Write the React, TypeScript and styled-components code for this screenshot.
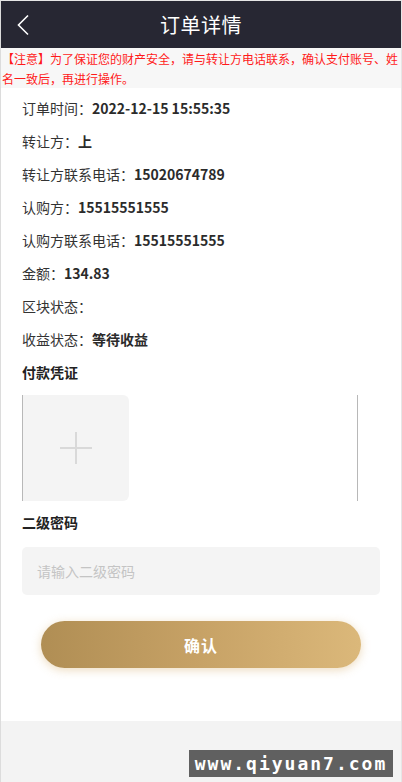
import React from 'react'
import styled, { createGlobalStyle } from 'styled-components'

const GlobalStyle = createGlobalStyle`
  html, body {
    margin: 0;
    padding: 0;
    background: #f3f3f3;
  }
  body {
    font-family: "Noto Sans CJK SC", "Liberation Sans", sans-serif;
  }
  * {
    box-sizing: border-box;
  }
`

const Page = styled.div`
  position: relative;
  width: 402px;
  height: 782px;
  border-top: 1px solid #e6e6e6;
  border-left: 1px solid #dcdcdc;
  border-right: 1px solid #e6e6e6;
  background: #f3f3f3;
`

const Header = styled.div`
  height: 47px;
  background: #272733;
  display: flex;
  align-items: center;
  justify-content: center;
  position: relative;
`

const BackButton = styled.div`
  position: absolute;
  left: 15px;
  top: 12px;
  width: 18px;
  height: 24px;
  display: flex;
  align-items: center;
`

const Title = styled.h1`
  margin: 0;
  color: #fff;
  font-size: 20px;
  font-weight: 400;
  letter-spacing: 0.5px;
`

const Notice = styled.div`
  background: #f7f7f7;
  color: #ff1a1a;
  font-size: 12px;
  line-height: 19.5px;
  padding: 1px 0 0 1px;
  height: 40px;
`

const Content = styled.div`
  background: #fff;
  padding: 4px 21px 53px;
`

const Row = styled.div`
  height: 33px;
  line-height: 33px;
  font-size: 14px;
  color: #333;
`

const Value = styled.span`
  font-weight: 700;
  color: #2b2b2b;
`

const SectionTitle = styled.div<{ $top: number }>`
  margin-top: ${p => p.$top}px;
  font-size: 14px;
  line-height: 20px;
  font-weight: 700;
  color: #222;
`

const Uploader = styled.div`
  margin-top: 13px;
  width: 336px;
  height: 106px;
  border-left: 1px solid #b8b8b8;
  border-right: 1px solid #b8b8b8;
`

const UploadBox = styled.div`
  width: 106px;
  height: 106px;
  background: #f4f4f4;
  border-radius: 0 6px 6px 0;
  display: flex;
  align-items: center;
  justify-content: center;
`

const PasswordInput = styled.input`
  display: block;
  margin-top: 15px;
  width: 100%;
  height: 48px;
  border: none;
  outline: none;
  border-radius: 5px;
  background: #f4f4f4;
  padding: 0 15px;
  font-size: 14px;
  font-family: inherit;
  color: #333;
  &::placeholder {
    color: #c4c4c4;
  }
`

const ConfirmButton = styled.button`
  display: block;
  margin: 26px auto 0;
  width: 320px;
  height: 47px;
  border: none;
  border-radius: 24px;
  background: linear-gradient(90deg, #b08e54 0%, #c7a266 50%, #dbb87a 100%);
  box-shadow: 0 2px 10px rgba(214, 176, 110, 0.45);
  color: #fff;
  font-family: inherit;
  font-size: 16px;
  font-weight: 700;
  letter-spacing: 1px;
`

const Watermark = styled.div`
  position: absolute;
  right: 8px;
  bottom: 5px;
  width: 204px;
  height: 27px;
  background: #606060;
  color: #fff;
  font-family: "DejaVu Sans Mono", monospace;
  font-weight: 700;
  font-size: 18px;
  letter-spacing: 2px;
  line-height: 27px;
  text-align: center;
`

const rows: [string, string][] = [
  ['订单时间：', '2022-12-15 15:55:35'],
  ['转让方：', '上'],
  ['转让方联系电话：', '15020674789'],
  ['认购方：', '15515551555'],
  ['认购方联系电话：', '15515551555'],
  ['金额：', '134.83'],
  ['区块状态：', ''],
  ['收益状态：', '等待收益'],
]

const App = () => (
  <Page>
    <GlobalStyle />
    <Header>
      <BackButton>
        <svg width='14' height='22' viewBox='0 0 14 22' fill='none'>
          <path d='M12 1.5 L2.5 11 L12 20.5' stroke='#fff' strokeWidth='1.6' />
        </svg>
      </BackButton>
      <Title>订单详情</Title>
    </Header>
    <Notice>【注意】为了保证您的财产安全，请与转让方电话联系，确认支付账号、姓名一致后，再进行操作。</Notice>
    <Content>
      {rows.map(([label, value]) => (
        <Row key={label}>
          {label}
          <Value>{value}</Value>
        </Row>
      ))}
      <SectionTitle $top={6}>付款凭证</SectionTitle>
      <Uploader>
        <UploadBox>
          <svg width='34' height='34' viewBox='0 0 34 34'>
            <path d='M17 1 V33 M1 17 H33' stroke='#d9d9d9' strokeWidth='2' />
          </svg>
        </UploadBox>
      </Uploader>
      <SectionTitle $top={11}>二级密码</SectionTitle>
      <PasswordInput type='password' placeholder='请输入二级密码' />
      <ConfirmButton>确认</ConfirmButton>
    </Content>
    <Watermark>www.qiyuan7.com</Watermark>
  </Page>
)

export default App
